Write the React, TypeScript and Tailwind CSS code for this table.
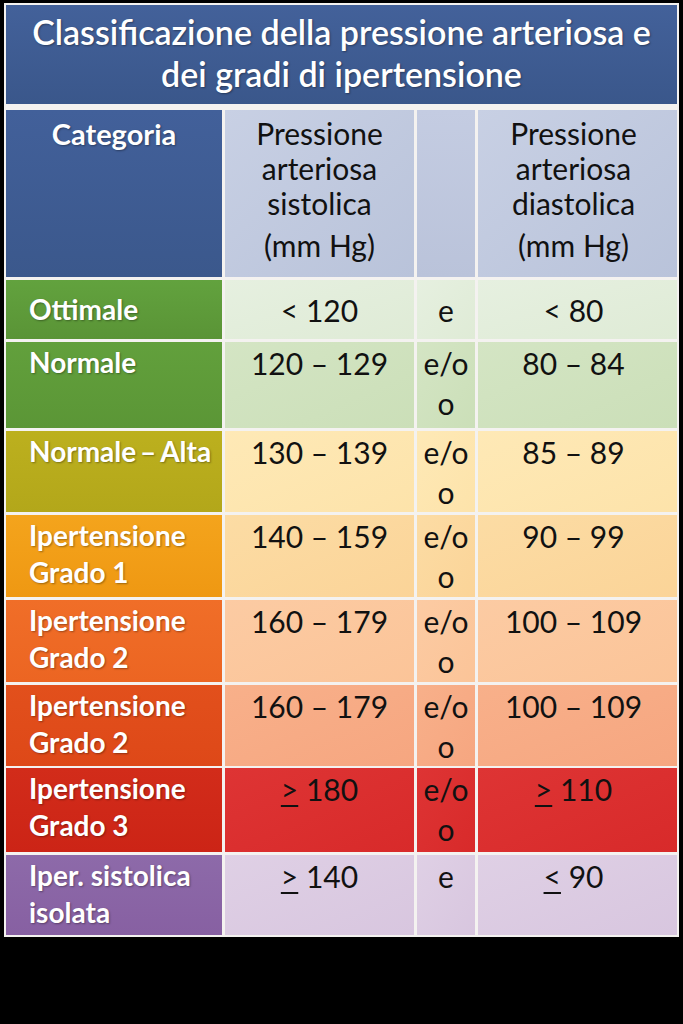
import type { ReactNode } from 'react';

const FONT = "font-['Lato','Open_Sans',sans-serif]";
const COLS = 'grid grid-cols-[216px_189px_58px_199px] gap-x-[3px]';
const SHADOW = '[text-shadow:1px_1px_2px_rgba(0,0,0,0.35)]';

type Row = {
  cat: ReactNode;
  sys: ReactNode;
  conj: ReactNode;
  dia: ReactNode;
  height: string;
  catBg: string;
  cellBg: string;
  single?: boolean;
};

// underlined ">" / "<" as in the original slide (≥ / ≤)
function Ge({ sign }: { sign: string }) {
  return <span className="underline decoration-[1.5px] underline-offset-[4px]">{sign}</span>;
}

const EO = (
  <>
    e/o
    <br />o
  </>
);

const ROWS: Row[] = [
  {
    cat: 'Ottimale',
    sys: '< 120',
    conj: 'e',
    dia: '< 80',
    height: 'h-[59px]',
    catBg: 'bg-gradient-to-b from-[#62a23e] to-[#5a9436]',
    cellBg: 'bg-gradient-to-br from-[#e6f0e0] to-[#dfebd6]',
    single: true,
  },
  {
    cat: 'Normale',
    sys: '120 – 129',
    conj: EO,
    dia: '80 – 84',
    height: 'h-[86px]',
    catBg: 'bg-gradient-to-b from-[#62a03c] to-[#5b9636]',
    cellBg: 'bg-gradient-to-br from-[#d4e5c4] to-[#cbdfb8]',
  },
  {
    cat: (
      <>
        Normale<span className="tracking-[-3px]"> </span>–<span className="tracking-[-3px]"> </span>Alta
      </>
    ),
    sys: '130 – 139',
    conj: EO,
    dia: '85 – 89',
    height: 'h-[81px]',
    catBg: 'bg-gradient-to-b from-[#bcb01e] to-[#b3a71a]',
    cellBg: 'bg-gradient-to-br from-[#fee9b6] to-[#fde3aa]',
  },
  {
    cat: (
      <>
        Ipertensione
        <br />
        Grado 1
      </>
    ),
    sys: '140 – 159',
    conj: EO,
    dia: '90 – 99',
    height: 'h-[82px]',
    catBg: 'bg-gradient-to-b from-[#f4a41c] to-[#ef9812]',
    cellBg: 'bg-gradient-to-br from-[#fcdca4] to-[#fbd498]',
  },
  {
    cat: (
      <>
        Ipertensione
        <br />
        Grado 2
      </>
    ),
    sys: '160 – 179',
    conj: EO,
    dia: '100 – 109',
    height: 'h-[82px]',
    catBg: 'bg-gradient-to-b from-[#f06e28] to-[#ec6522]',
    cellBg: 'bg-gradient-to-br from-[#fccba3] to-[#fbc498]',
  },
  {
    cat: (
      <>
        Ipertensione
        <br />
        Grado 2
      </>
    ),
    sys: '160 – 179',
    conj: EO,
    dia: '100 – 109',
    height: 'h-[80px]',
    catBg: 'bg-gradient-to-b from-[#e2501c] to-[#de4818]',
    cellBg: 'bg-gradient-to-br from-[#f8b08a] to-[#f6a680]',
  },
  {
    cat: (
      <>
        Ipertensione
        <br />
        Grado 3
      </>
    ),
    sys: (
      <>
        <Ge sign=">" /> 180
      </>
    ),
    conj: EO,
    dia: (
      <>
        <Ge sign=">" /> 110
      </>
    ),
    height: 'h-[84px]',
    catBg: 'bg-gradient-to-b from-[#d22c1a] to-[#cc2416]',
    cellBg: 'bg-gradient-to-br from-[#de3434] to-[#d82a2a]',
  },
  {
    cat: (
      <>
        Iper. sistolica
        <br />
        isolata
      </>
    ),
    sys: (
      <>
        <Ge sign=">" /> 140
      </>
    ),
    conj: 'e',
    dia: (
      <>
        <Ge sign="<" /> 90
      </>
    ),
    height: 'h-[80px]',
    catBg: 'bg-gradient-to-b from-[#8d6aa9] to-[#8760a2]',
    cellBg: 'bg-gradient-to-br from-[#dfd0e5] to-[#d8c6df]',
  },
];

function BodyRow({ row }: { row: Row }) {
  const valueCls = row.single
    ? 'flex items-center justify-center text-center text-[30px] leading-[40px] text-[#111]'
    : 'pt-[1px] text-center text-[30px] leading-[40px] text-[#111]';
  return (
    <div className={`${COLS} ${row.height}`}>
      <div
        className={`${row.catBg} ${SHADOW} pl-[23px] text-[28px] font-bold text-white ${
          row.single ? 'flex items-center leading-[37px]' : 'pt-[2px] leading-[37px]'
        }`}
      >
        <div>{row.cat}</div>
      </div>
      <div className={`${row.cellBg} ${valueCls}`}>
        <div>{row.sys}</div>
      </div>
      <div className={`${row.cellBg} ${valueCls}`}>
        <div>{row.conj}</div>
      </div>
      <div className={`${row.cellBg} ${valueCls} pr-[8px]`}>
        <div>{row.dia}</div>
      </div>
    </div>
  );
}

function HeaderCell({ kind }: { kind: string }) {
  return (
    <div className="pt-[6px] text-center text-[30px] leading-[35px] text-[#111]">
      Pressione
      <br />
      arteriosa
      <br />
      {kind}
      <div className="mt-[7px]">(mm Hg)</div>
    </div>
  );
}

export default function App() {
  return (
    <div className={`h-[1024px] w-[683px] overflow-hidden bg-black pt-[3px] ${FONT}`}>
      <div className="ml-[4px] flex w-[675px] flex-col gap-y-[3px] bg-[#f4f2f0] p-[2px]">
        {/* Title */}
        <div
          className={`mb-[3px] flex h-[99px] items-center justify-center bg-gradient-to-b from-[#43619a] to-[#3a578b] pb-[3px] text-center text-[34px] font-semibold leading-[42px] text-white ${SHADOW}`}
        >
          <h1>
            Classificazione della pressione arteriosa e
            <br />
            dei gradi di ipertensione
          </h1>
        </div>

        {/* Header row */}
        <div className={`${COLS} h-[167px]`}>
          <div
            className={`bg-gradient-to-b from-[#42609a] to-[#3b588c] pt-[6px] text-center text-[29px] font-bold leading-[35px] text-white ${SHADOW}`}
          >
            Categoria
          </div>
          <div className="bg-gradient-to-br from-[#c8d0e4] to-[#b9c3da]">
            <HeaderCell kind="sistolica" />
          </div>
          <div className="bg-gradient-to-b from-[#c4cce2] to-[#bac3da]" />
          <div className="bg-gradient-to-br from-[#c8d0e4] to-[#b9c3da] pr-[8px]">
            <HeaderCell kind="diastolica" />
          </div>
        </div>

        {ROWS.map((row, i) => (
          <BodyRow key={i} row={row} />
        ))}
      </div>
    </div>
  );
}
